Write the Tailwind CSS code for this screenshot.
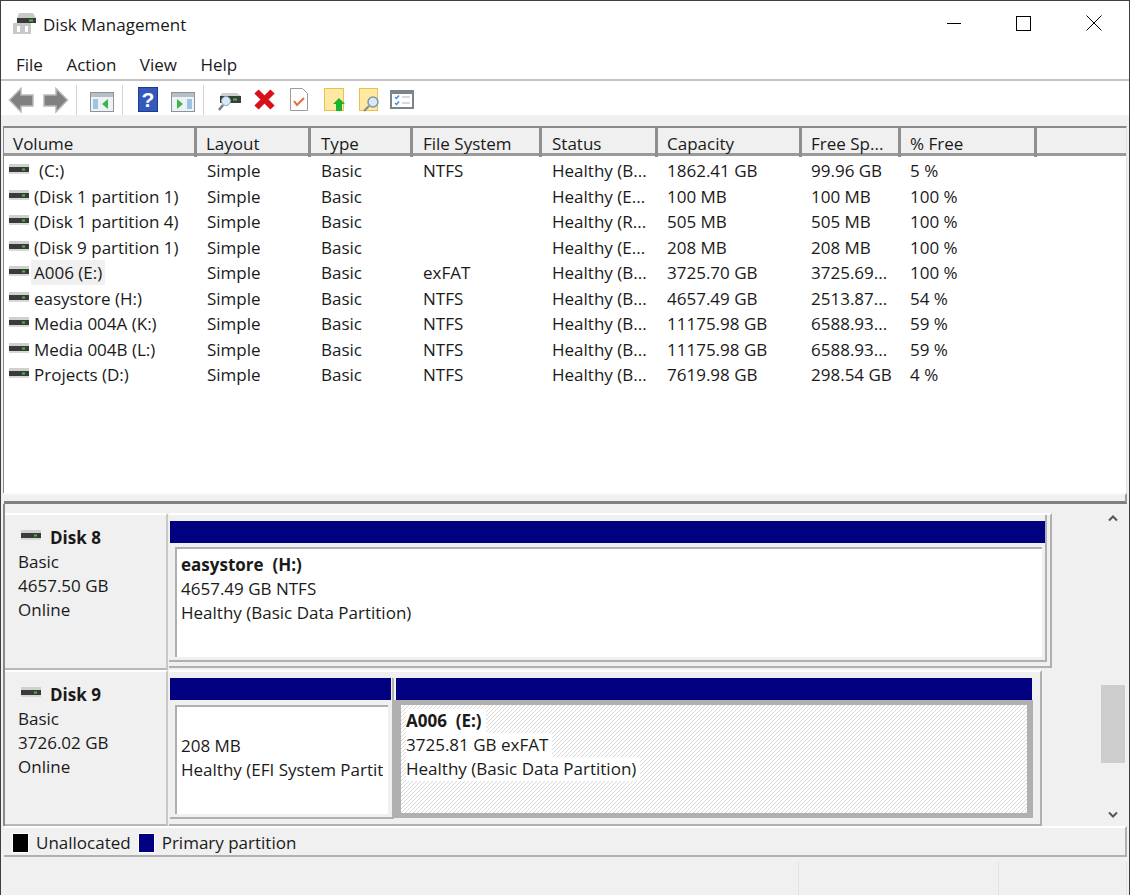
<!DOCTYPE html>
<html lang="en">

<head>
    <meta charset="UTF-8">
    <title>Disk Management</title>
    <script src="https://cdn.jsdelivr.net/npm/@tailwindcss/browser@4"></script>
</head>

<body>
    <div class="h-[895px] w-[1130px] overflow-hidden bg-[#f0f0f0] border-t border-l border-r border-[#3c4043] font-['Open_Sans','Noto_Sans',sans-serif] text-[17px] text-[#1a1a1a] flex flex-col">

        <!-- title bar -->
        <div class="h-[46px] bg-white flex items-center pl-[12px]">
            <svg class="shrink-0" width="24" height="22" viewBox="0 0 24 22">
                <path d="M6 0h14l3 5H4z" fill="#c9c9c9" />
                <rect x="4" y="5" width="19" height="5" fill="#3a3a3a" />
                <rect x="16" y="6.500" width="4" height="2" fill="#35c43a" />
                <rect x="0" y="10" width="18" height="11" fill="#c8c8c8" />
                <rect x="4" y="13" width="3" height="6" fill="#fff" />
                <rect x="12" y="13" width="3" height="6" fill="#fff" />
            </svg>
            <span class="ml-[6px] pt-[2px]">Disk Management</span>
            <div class="ml-auto flex items-center pb-[2px]">
                <div class="w-[70px] h-[44px] flex items-center justify-center"><div class="w-[14px] h-px bg-black"></div></div>
                <div class="w-[70px] h-[44px] flex items-center justify-center"><div class="w-[15px] h-[15px] border border-black mr-[2px]"></div></div>
                <div class="w-[70px] h-[44px] flex items-center justify-center">
                    <svg width="16" height="16" viewBox="0 0 16 16"><path d="M.5.500l15 15M15.500.500l-15 15" stroke="#000" fill="none" /></svg>
                </div>
            </div>
        </div>

        <!-- menu -->
        <div class="h-[34px] bg-white border-b-2 border-[#c4c4c4] flex items-center pl-[15px] pt-[3px] gap-[23.500px]">
            <span>File</span><span>Action</span><span>View</span><span>Help</span>
        </div>

        <!-- toolbar -->
        <div class="h-[34px] bg-white flex items-center relative">
            <svg width="1128" height="34" viewBox="0 0 1128 34">
                <!-- back / forward -->
                <path d="M8.500 19L20 7.500V14h12v11H20v6z" fill="#808080" stroke="#b8b8b8" stroke-width="1.500" />
                <path d="M66.500 19L55 7.500V14H43v11h12v6z" fill="#808080" stroke="#b8b8b8" stroke-width="1.500" />
                <rect x="75" y="4" width="1" height="30" fill="#d4d4d4" />
                <!-- hide tree -->
                <rect x="89.500" y="11.500" width="23" height="19" fill="#eef2f6" stroke="#8c9399" />
                <rect x="90" y="12" width="22" height="4" fill="#b7bfc6" />
                <rect x="92" y="18" width="5" height="10" fill="#9dc3e6" />
                <path d="M101 23l6-5v10z" fill="#3cb54a" />
                <rect x="121" y="4" width="1" height="30" fill="#d4d4d4" />
                <!-- help -->
                <rect x="137.500" y="6.500" width="19" height="24" fill="#3558bb" stroke="#1e3c8c" />
                <text x="147" y="26" text-anchor="middle" font-size="21" font-weight="700" fill="#fff" font-family="Liberation Sans">?</text>
                <!-- show tree -->
                <rect x="170.500" y="11.500" width="23" height="19" fill="#eef2f6" stroke="#8c9399" />
                <rect x="171" y="12" width="22" height="4" fill="#b7bfc6" />
                <rect x="186" y="18" width="5" height="10" fill="#9dc3e6" />
                <path d="M176 18l6 5-6 5z" fill="#3cb54a" />
                <rect x="202" y="4" width="1" height="30" fill="#d4d4d4" />
                <!-- rescan -->
                <path d="M221 12h15l4 3h-21z" fill="#cfcfcf" />
                <rect x="219" y="15" width="21" height="7" fill="#3c3c3c" />
                <rect x="232" y="17.500" width="4" height="2" fill="#35c43a" />
                <circle cx="225" cy="20" r="4.500" fill="#d6e9f5" stroke="#8aa5b8" />
                <path d="M222 24l-4 5" stroke="#7b7b7b" stroke-width="2.500" />
                <!-- delete -->
                <path d="M255.500 10.500l16 16M271.500 10.500l-16 16" stroke="#d8101c" stroke-width="6" />
                <!-- properties -->
                <path d="M289.500 7.500h12l5 5v17h-17z" fill="#fff" stroke="#9c9c9c" />
                <path d="M293 20l3 4 7-7" stroke="#e96b3c" stroke-width="2" fill="none" />
                <!-- open -->
                <rect x="323.500" y="7.500" width="19" height="22" fill="#ffe9a2" stroke="#e8c24e" />
                <path d="M338 17l6 6h-3v7h-6v-7h-3z" fill="#19b32c" />
                <!-- explore -->
                <rect x="358.500" y="7.500" width="18" height="22" fill="#ffe9a2" stroke="#e8c24e" />
                <circle cx="372" cy="21" r="5" fill="#d6e9f5" stroke="#7d97a8" stroke-width="1.500" />
                <path d="M368 25l-5 5" stroke="#8a8a8a" stroke-width="2" />
                <!-- options -->
                <rect x="390" y="10" width="22" height="17" fill="#fff" stroke="#7d8489" stroke-width="2" />
                <rect x="390" y="10" width="22" height="3" fill="#7d8489" />
                <path d="M394 16l1.500 1.500 2.500-3M394 22l1.500 1.500 2.500-3" stroke="#3f8fd8" stroke-width="1.500" fill="none" />
                <path d="M401 16h8M401 22h8" stroke="#b4b4b4" />
            </svg>
        </div>

        <div class="h-[11px]"></div>

        <!-- volume list -->
        <div class="ml-[2px] mr-[2px] h-[367px] bg-white border-t-[2px] border-[#8a8a8a] border-l border-r border-l-[#8a8a8a] border-r-[#e0e0e0] flex flex-col">
            <div class="grid grid-cols-[193px_114px_102px_129px_116px_144px_99px_136px_1fr] h-[28px] bg-[#f0f0f0] border-b-[3px] border-[#9a9a9a]">
                <div class="border-r-[3px] border-[#8f8f8f] pl-[9px] pt-[3px]">Volume</div>
                <div class="border-r-[3px] border-[#8f8f8f] pl-[9px] pt-[3px]">Layout</div>
                <div class="border-r-[3px] border-[#8f8f8f] pl-[10px] pt-[3px]">Type</div>
                <div class="border-r-[3px] border-[#8f8f8f] pl-[10px] pt-[3px]">File System</div>
                <div class="border-r-[3px] border-[#8f8f8f] pl-[10px] pt-[3px]">Status</div>
                <div class="border-r-[3px] border-[#8f8f8f] pl-[9px] pt-[3px]">Capacity</div>
                <div class="border-r-[3px] border-[#8f8f8f] pl-[9px] pt-[3px]">Free Sp...</div>
                <div class="border-r-[3px] border-[#8f8f8f] pl-[9px] pt-[3px]">% Free</div>
                <div></div>
            </div>
            <div id="rows" class="pt-[2px] flex-1">
                <div class="grid grid-cols-[193px_114px_102px_129px_116px_144px_99px_136px_1fr] h-[25.500px] items-center">
                    <div class="flex items-center pl-[5px]"><svg class="mr-[5px] mb-[3px]" width="20" height="12" viewBox="0 0 20 12"><rect y="1" width="20" height="3" fill="#d0d0d0" /><rect y="4" width="20" height="5" fill="#3a3a3a" /><rect x="13" y="5.500" width="3" height="2" fill="#35c43a" /><rect y="9" width="20" height="2" fill="#d8d8d8" /></svg><span class="pl-[5px]">(C:)</span></div>
                    <div class="pl-[10px]">Simple</div><div class="pl-[10px]">Basic</div><div class="pl-[10px]">NTFS</div><div class="pl-[10px]">Healthy (B...</div><div class="pl-[9px]">1862.41 GB</div><div class="pl-[9px]">99.96 GB</div><div class="pl-[9px]">5 %</div>
                </div>
                <div class="grid grid-cols-[193px_114px_102px_129px_116px_144px_99px_136px_1fr] h-[25.500px] items-center">
                    <div class="flex items-center pl-[5px]"><svg class="mr-[5px] mb-[3px]" width="20" height="12" viewBox="0 0 20 12"><rect y="1" width="20" height="3" fill="#d0d0d0" /><rect y="4" width="20" height="5" fill="#3a3a3a" /><rect x="13" y="5.500" width="3" height="2" fill="#35c43a" /><rect y="9" width="20" height="2" fill="#d8d8d8" /></svg><span>(Disk 1 partition 1)</span></div>
                    <div class="pl-[10px]">Simple</div><div class="pl-[10px]">Basic</div><div class="pl-[10px]"></div><div class="pl-[10px]">Healthy (E...</div><div class="pl-[9px]">100 MB</div><div class="pl-[9px]">100 MB</div><div class="pl-[9px]">100 %</div>
                </div>
                <div class="grid grid-cols-[193px_114px_102px_129px_116px_144px_99px_136px_1fr] h-[25.500px] items-center">
                    <div class="flex items-center pl-[5px]"><svg class="mr-[5px] mb-[3px]" width="20" height="12" viewBox="0 0 20 12"><rect y="1" width="20" height="3" fill="#d0d0d0" /><rect y="4" width="20" height="5" fill="#3a3a3a" /><rect x="13" y="5.500" width="3" height="2" fill="#35c43a" /><rect y="9" width="20" height="2" fill="#d8d8d8" /></svg><span>(Disk 1 partition 4)</span></div>
                    <div class="pl-[10px]">Simple</div><div class="pl-[10px]">Basic</div><div class="pl-[10px]"></div><div class="pl-[10px]">Healthy (R...</div><div class="pl-[9px]">505 MB</div><div class="pl-[9px]">505 MB</div><div class="pl-[9px]">100 %</div>
                </div>
                <div class="grid grid-cols-[193px_114px_102px_129px_116px_144px_99px_136px_1fr] h-[25.500px] items-center">
                    <div class="flex items-center pl-[5px]"><svg class="mr-[5px] mb-[3px]" width="20" height="12" viewBox="0 0 20 12"><rect y="1" width="20" height="3" fill="#d0d0d0" /><rect y="4" width="20" height="5" fill="#3a3a3a" /><rect x="13" y="5.500" width="3" height="2" fill="#35c43a" /><rect y="9" width="20" height="2" fill="#d8d8d8" /></svg><span>(Disk 9 partition 1)</span></div>
                    <div class="pl-[10px]">Simple</div><div class="pl-[10px]">Basic</div><div class="pl-[10px]"></div><div class="pl-[10px]">Healthy (E...</div><div class="pl-[9px]">208 MB</div><div class="pl-[9px]">208 MB</div><div class="pl-[9px]">100 %</div>
                </div>
                <div class="grid grid-cols-[193px_114px_102px_129px_116px_144px_99px_136px_1fr] h-[25.500px] items-center">
                    <div class="flex items-center pl-[5px]"><svg class="mr-[2px] mb-[3px]" width="20" height="12" viewBox="0 0 20 12"><rect y="1" width="20" height="3" fill="#d0d0d0" /><rect y="4" width="20" height="5" fill="#3a3a3a" /><rect x="13" y="5.500" width="3" height="2" fill="#35c43a" /><rect y="9" width="20" height="2" fill="#d8d8d8" /></svg><span class="bg-[#f0f0f0] px-[3px] leading-[25px]">A006 (E:)</span></div>
                    <div class="pl-[10px]">Simple</div><div class="pl-[10px]">Basic</div><div class="pl-[10px]">exFAT</div><div class="pl-[10px]">Healthy (B...</div><div class="pl-[9px]">3725.70 GB</div><div class="pl-[9px]">3725.69...</div><div class="pl-[9px]">100 %</div>
                </div>
                <div class="grid grid-cols-[193px_114px_102px_129px_116px_144px_99px_136px_1fr] h-[25.500px] items-center">
                    <div class="flex items-center pl-[5px]"><svg class="mr-[5px] mb-[3px]" width="20" height="12" viewBox="0 0 20 12"><rect y="1" width="20" height="3" fill="#d0d0d0" /><rect y="4" width="20" height="5" fill="#3a3a3a" /><rect x="13" y="5.500" width="3" height="2" fill="#35c43a" /><rect y="9" width="20" height="2" fill="#d8d8d8" /></svg><span>easystore (H:)</span></div>
                    <div class="pl-[10px]">Simple</div><div class="pl-[10px]">Basic</div><div class="pl-[10px]">NTFS</div><div class="pl-[10px]">Healthy (B...</div><div class="pl-[9px]">4657.49 GB</div><div class="pl-[9px]">2513.87...</div><div class="pl-[9px]">54 %</div>
                </div>
                <div class="grid grid-cols-[193px_114px_102px_129px_116px_144px_99px_136px_1fr] h-[25.500px] items-center">
                    <div class="flex items-center pl-[5px]"><svg class="mr-[5px] mb-[3px]" width="20" height="12" viewBox="0 0 20 12"><rect y="1" width="20" height="3" fill="#d0d0d0" /><rect y="4" width="20" height="5" fill="#3a3a3a" /><rect x="13" y="5.500" width="3" height="2" fill="#35c43a" /><rect y="9" width="20" height="2" fill="#d8d8d8" /></svg><span>Media 004A (K:)</span></div>
                    <div class="pl-[10px]">Simple</div><div class="pl-[10px]">Basic</div><div class="pl-[10px]">NTFS</div><div class="pl-[10px]">Healthy (B...</div><div class="pl-[9px]">11175.98 GB</div><div class="pl-[9px]">6588.93...</div><div class="pl-[9px]">59 %</div>
                </div>
                <div class="grid grid-cols-[193px_114px_102px_129px_116px_144px_99px_136px_1fr] h-[25.500px] items-center">
                    <div class="flex items-center pl-[5px]"><svg class="mr-[5px] mb-[3px]" width="20" height="12" viewBox="0 0 20 12"><rect y="1" width="20" height="3" fill="#d0d0d0" /><rect y="4" width="20" height="5" fill="#3a3a3a" /><rect x="13" y="5.500" width="3" height="2" fill="#35c43a" /><rect y="9" width="20" height="2" fill="#d8d8d8" /></svg><span>Media 004B (L:)</span></div>
                    <div class="pl-[10px]">Simple</div><div class="pl-[10px]">Basic</div><div class="pl-[10px]">NTFS</div><div class="pl-[10px]">Healthy (B...</div><div class="pl-[9px]">11175.98 GB</div><div class="pl-[9px]">6588.93...</div><div class="pl-[9px]">59 %</div>
                </div>
                <div class="grid grid-cols-[193px_114px_102px_129px_116px_144px_99px_136px_1fr] h-[25.500px] items-center">
                    <div class="flex items-center pl-[5px]"><svg class="mr-[5px] mb-[3px]" width="20" height="12" viewBox="0 0 20 12"><rect y="1" width="20" height="3" fill="#d0d0d0" /><rect y="4" width="20" height="5" fill="#3a3a3a" /><rect x="13" y="5.500" width="3" height="2" fill="#35c43a" /><rect y="9" width="20" height="2" fill="#d8d8d8" /></svg><span>Projects (D:)</span></div>
                    <div class="pl-[10px]">Simple</div><div class="pl-[10px]">Basic</div><div class="pl-[10px]">NTFS</div><div class="pl-[10px]">Healthy (B...</div><div class="pl-[9px]">7619.98 GB</div><div class="pl-[9px]">298.54 GB</div><div class="pl-[9px]">4 %</div>
                </div>
            </div>
        </div>

        <!-- splitter -->
        <div class="ml-[3px] mr-[2px] h-[11px] bg-[#f0f0f0] border-t-[2px] border-t-[#f7f7f7] border-b-[3px] border-b-[#7f7f7f] border-r-2 border-r-[#9a9a9a]"></div>

        <!-- disks -->
        <div class="ml-[2px] mr-[3px] h-[322px] flex border-l-2 border-[#8a8a8a] pt-[9px]">
            <div class="flex-1 flex flex-col">
                <!-- disk 8 -->
                <div class="h-[157px] flex">
                    <div class="w-[163px] h-[157px] border-t-2 border-t-white border-r-[2px] border-b-[2px] border-r-[#c8c8c8] border-b-[#b8b8b8] pl-[13px] pt-[11px] leading-[24px]">
                        <div class="flex items-center font-bold"><svg class="ml-[3px] mr-[9px] mb-[6px]" width="20" height="12" viewBox="0 0 20 12"><rect y="1" width="20" height="3" fill="#d0d0d0" /><rect y="4" width="20" height="5" fill="#3a3a3a" /><rect x="13" y="5.500" width="3" height="2" fill="#35c43a" /><rect y="9" width="20" height="2" fill="#d8d8d8" /></svg>Disk 8</div>
                        <div>Basic</div><div>4657.50 GB</div><div>Online</div>
                    </div>
                    <div class="w-[883px] h-[155px] ml-px border-t-2 border-t-white border-r-[2px] border-b-[2px] border-r-[#b0b0b0] border-b-[#b0b0b0]">
                        <div class="w-[878px] h-[147px] border-r-[2px] border-b-[2px] border-[#b0b0b0] pl-[1px] pt-[6px]">
                            <div class="h-[22px] w-[875px] bg-[#000080]"></div>
                            <div class="ml-[5px] mt-[4px] w-[867px] h-[110px] bg-white border-l-2 border-t-2 border-[#b0b0b0] pl-[4px] pt-[4px] leading-[24px]">
                                <div class="font-bold">easystore&nbsp; (H:)</div>
                                <div>4657.49 GB NTFS</div>
                                <div>Healthy (Basic Data Partition)</div>
                            </div>
                        </div>
                    </div>
                </div>
                <!-- disk 9 -->
                <div class="h-[156px] flex">
                    <div class="w-[163px] h-[156px] border-t-2 border-t-white border-r-[2px] border-b-[2px] border-r-[#c8c8c8] border-b-[#b8b8b8] pl-[13px] pt-[11px] leading-[24px]">
                        <div class="flex items-center font-bold"><svg class="ml-[3px] mr-[9px] mb-[6px]" width="20" height="12" viewBox="0 0 20 12"><rect y="1" width="20" height="3" fill="#d0d0d0" /><rect y="4" width="20" height="5" fill="#3a3a3a" /><rect x="13" y="5.500" width="3" height="2" fill="#35c43a" /><rect y="9" width="20" height="2" fill="#d8d8d8" /></svg>Disk 9</div>
                        <div>Basic</div><div>3726.02 GB</div><div>Online</div>
                    </div>
                    <div class="w-[873px] h-[156px] ml-px border-t-2 border-t-white border-r-[2px] border-b-[2px] border-r-[#b0b0b0] border-b-[#b0b0b0] pl-[1px] pt-[6px] flex items-start">
                        <div class="w-[224px] h-[141px] border-r-2 border-b-2 border-[#b0b0b0]">
                            <div class="h-[22px] w-[221px] bg-[#000080]"></div>
                            <div class="ml-[5px] mt-[5px] w-[213px] h-[109px] bg-white border-l-2 border-t-2 border-[#b0b0b0] pl-[4px] pr-[5px] pt-[27px] leading-[24px]">
                                <div class="overflow-hidden whitespace-nowrap">
                                    <div>208 MB</div>
                                    <div>Healthy (EFI System Partit</div>
                                </div>
                            </div>
                        </div>
                        <div class="w-[639px] relative">
                            <div class="h-[22px] w-[636px] ml-[2px] bg-[#000080]"></div>
                            <div class="w-[639px] h-[118px] border-l-[7px] border-r-[6px] border-y-[5px] border-[#b0b0b0] bg-[linear-gradient(135deg,#d8d8d8_7.500%,#fff_7.500%,#fff_42.500%,#d8d8d8_42.500%,#d8d8d8_57.500%,#fff_57.500%,#fff_92.500%,#d8d8d8_92.500%)] bg-size-[4px_4px] pl-[5px] pt-[4px] leading-[24px]">
                                <div class="font-bold"><span class="inline-block bg-white pr-[4px]">A006&nbsp; (E:)</span></div>
                                <div><span class="inline-block bg-white pr-[4px]">3725.81 GB exFAT</span></div>
                                <div><span class="inline-block bg-white pr-[4px]">Healthy (Basic Data Partition)</span></div>
                            </div>
                        </div>
                    </div>
                </div>
            </div>
            <!-- scrollbar -->
            <div class="w-[26px] flex flex-col items-center relative">
                <svg class="mt-[2px]" width="10" height="7" viewBox="0 0 10 7"><path d="M1 5.500l4-4 4 4" stroke="#555" stroke-width="2" fill="none" /></svg>
                <div class="absolute top-[172px] left-px w-[24px] h-[78px] bg-[#cdcdcd]"></div>
                <svg class="mt-auto mb-[8px]" width="10" height="7" viewBox="0 0 10 7"><path d="M1 1.500l4 4 4-4" stroke="#555" stroke-width="2" fill="none" /></svg>
            </div>
        </div>

        <!-- legend -->
        <div class="ml-[3px] mr-[2px] h-[31px] border-r-2 border-b-2 border-[#b0b0b0] border-t-2 border-t-white flex items-center pl-[8px] pt-[2px]">
            <div class="w-[17px] h-[20px] bg-black border border-white"></div>
            <span class="ml-[7px] pt-px">Unallocated</span>
            <div class="ml-[7px] w-[17px] h-[20px] bg-[#000080] border border-white"></div>
            <span class="ml-[7px] pt-px">Primary partition</span>
        </div>

        <!-- status bar -->
        <div class="flex-1 flex justify-end pt-[5px]">
            <div class="w-[200px] border-l border-[#e2e2e2]"></div>
            <div class="w-[129px] border-x border-[#e2e2e2] mr-[2px]"></div>
        </div>
    </div>
</body>

</html>
